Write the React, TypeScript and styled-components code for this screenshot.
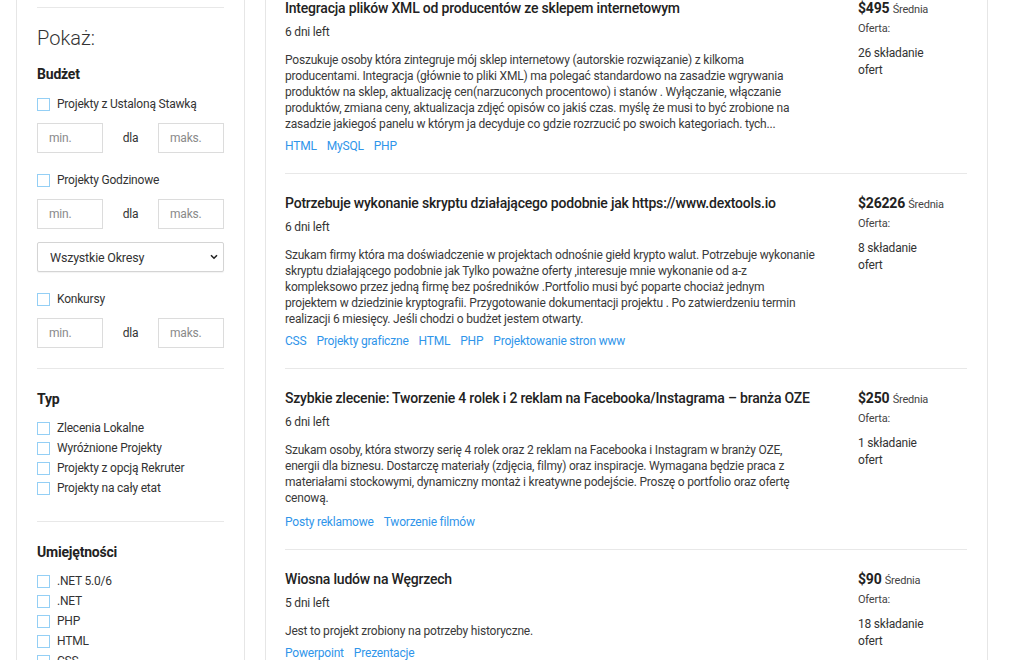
import styled, { createGlobalStyle } from "styled-components";

const GlobalStyle = createGlobalStyle`
  html, body {
    margin: 0;
    padding: 0;
    background: #ffffff;
    font-family: Roboto, "Liberation Sans", Arial, sans-serif;
    color: #333333;
    letter-spacing: -0.2px;
    overflow: hidden;
  }
`;

const Page = styled.div`
  display: flex;
  align-items: flex-start;
  gap: 20px;
  padding-left: 16px;
  margin-top: -22px;
`;

const Sidebar = styled.aside`
  width: 187px;
  flex-shrink: 0;
  padding: 28px 20px 40px;
  border: 1px solid #e6e6e6;
  background: #fff;
`;

const Divider = styled.hr<{ $top?: number; $bottom?: number }>`
  border: none;
  border-top: 1px solid #e8e8e8;
  margin: ${({ $top = 0 }) => $top}px 0 ${({ $bottom = 0 }) => $bottom}px;
`;

const ShowTitle = styled.div`
  font-size: 20px;
  line-height: 24px;
  font-weight: 300;
  letter-spacing: 0;
  color: #333;
  margin-top: 18px;
`;

const GroupTitle = styled.div<{ $top: number }>`
  font-size: 14px;
  line-height: 20px;
  font-weight: 700;
  color: #222;
  margin-top: ${({ $top }) => $top}px;
`;

const CheckRow = styled.label<{ $top?: number }>`
  display: flex;
  align-items: center;
  gap: 7px;
  font-size: 12px;
  line-height: 20px;
  color: #333;
  margin-top: ${({ $top = 0 }) => $top}px;
`;

const Box = styled.span`
  width: 13px;
  height: 13px;
  box-sizing: border-box;
  border: 1px solid #94cff5;
  background: #fff;
  flex-shrink: 0;
`;

const RangeRow = styled.div<{ $top: number }>`
  display: grid;
  grid-template-columns: 66px 1fr 66px;
  align-items: center;
  margin-top: ${({ $top }) => $top}px;
`;

const RangeInput = styled.input`
  box-sizing: border-box;
  width: 66px;
  height: 30px;
  border: 1px solid #dcdcdc;
  padding: 0 11px;
  font-family: inherit;
  font-size: 12px;
  letter-spacing: -0.2px;
  color: #333;
  outline: none;

  &::placeholder {
    color: #8a8a8a;
  }
`;

const RangeSep = styled.span`
  text-align: center;
  font-size: 12px;
  color: #333;
`;

const SelectWrap = styled.div`
  position: relative;
  margin-top: 13px;
`;

const PeriodSelect = styled.select`
  appearance: none;
  -webkit-appearance: none;
  box-sizing: border-box;
  width: 100%;
  height: 30px;
  border: 1px solid #d4d4d4;
  border-radius: 2px;
  padding: 0 12px;
  background: #fff;
  font-family: inherit;
  font-size: 12.5px;
  letter-spacing: -0.2px;
  color: #333;
  box-shadow: 0 1px 1px rgba(0, 0, 0, 0.05);
`;

const Chevron = styled.svg`
  position: absolute;
  right: 6px;
  top: 12px;
  width: 8px;
  height: 6px;
  pointer-events: none;
`;

const CheckList = styled.div`
  margin-top: 9px;
`;

const Main = styled.main`
  width: 682px;
  flex-shrink: 0;
  padding: 0 20px 0 19px;
  border: 1px solid #e6e6e6;
  background: #fff;
`;

const Card = styled.article`
  display: grid;
  grid-template-columns: 1fr 109px;
  padding: 19px 0 19px;
  border-bottom: 1px solid #e8e8e8;
`;

const CardBody = styled.div`
  min-width: 0;
`;

const Title = styled.div`
  font-size: 14px;
  line-height: 20px;
  font-weight: 500;
  color: #222;
`;

const Deadline = styled.div`
  font-size: 12px;
  line-height: 16px;
  color: #333;
  margin-top: 6px;
`;

const Description = styled.p`
  max-width: 532px;
  font-size: 12px;
  line-height: 16px;
  color: #3a3a3a;
  margin: 12px 0 0;
`;

const Tags = styled.div<{ $extra: number }>`
  display: flex;
  gap: 10px;
  margin-top: ${({ $extra }) => 6 + $extra}px;
  font-size: 12px;
  line-height: 16px;
`;

const Tag = styled.a`
  color: #2f95ea;
  text-decoration: none;
`;

const PriceCol = styled.div`
  width: 72px;
`;

const Price = styled.div`
  white-space: nowrap;
  font-size: 14px;
  line-height: 20px;
  font-weight: 700;
  color: #222;

  span {
    font-size: 11px;
    font-weight: 400;
    color: #444;
  }
`;

const OfferLabel = styled.div`
  font-size: 11px;
  line-height: 14px;
  color: #444;
  margin-top: 2px;
`;

const OfferCount = styled.div`
  font-size: 12px;
  line-height: 16.5px;
  color: #333;
  margin-top: 9px;
`;

type Project = {
  title: string;
  days: string;
  description: string;
  tags: string[];
  price: string;
  offers: number;
  tagGap?: number;
};

const projects: Project[] = [
  {
    title: "Integracja plików XML od producentów ze sklepem internetowym",
    days: "6 dni left",
    description:
      "Poszukuje osoby która zintegruje mój sklep internetowy (autorskie rozwiązanie) z kilkoma producentami. Integracja (głównie to pliki XML) ma polegać standardowo na zasadzie wgrywania produktów na sklep, aktualizację cen(narzuconych procentowo) i stanów . Wyłączanie, włączanie produktów, zmiana ceny, aktualizacja zdjęć opisów co jakiś czas. myślę że musi to być zrobione na zasadzie jakiegoś panelu w którym ja decyduje co gdzie rozrzucić po swoich kategoriach. tych...",
    tags: ["HTML", "MySQL", "PHP"],
    price: "$495",
    offers: 26,
  },
  {
    title: "Potrzebuje wykonanie skryptu działającego podobnie jak https://www.dextools.io",
    days: "6 dni left",
    description:
      "Szukam firmy która ma doświadczenie w projektach odnośnie giełd krypto walut. Potrzebuje wykonanie skryptu działającego podobnie jak Tylko poważne oferty ,interesuje mnie wykonanie od a-z kompleksowo przez jedną firmę bez pośredników .Portfolio musi być poparte chociaż jednym projektem w dziedzinie kryptografii. Przygotowanie dokumentacji projektu . Po zatwierdzeniu termin realizacji 6 miesięcy. Jeśli chodzi o budżet jestem otwarty.",
    tags: ["CSS", "Projekty graficzne", "HTML", "PHP", "Projektowanie stron www"],
    price: "$26226",
    offers: 8,
  },
  {
    title: "Szybkie zlecenie: Tworzenie 4 rolek i 2 reklam na Facebooka/Instagrama – branża OZE",
    days: "6 dni left",
    description:
      "Szukam osoby, która stworzy serię 4 rolek oraz 2 reklam na Facebooka i Instagram w branży OZE, energii dla biznesu. Dostarczę materiały (zdjęcia, filmy) oraz inspiracje. Wymagana będzie praca z materiałami stockowymi, dynamiczny montaż i kreatywne podejście. Proszę o portfolio oraz ofertę cenową.",
    tags: ["Posty reklamowe", "Tworzenie filmów"],
    price: "$250",
    offers: 1,
    tagGap: 2,
  },
  {
    title: "Wiosna ludów na Węgrzech",
    days: "5 dni left",
    description: "Jest to projekt zrobiony na potrzeby historyczne.",
    tags: ["Powerpoint", "Prezentacje"],
    price: "$90",
    offers: 18,
  },
];

const types = ["Zlecenia Lokalne", "Wyróżnione Projekty", "Projekty z opcją Rekruter", "Projekty na cały etat"];
const skills = [".NET 5.0/6", ".NET", "PHP", "HTML", "CSS", "JavaScript"];

const Range = ({ top }: { top: number }) => (
  <RangeRow $top={top}>
    <RangeInput placeholder="min." />
    <RangeSep>dla</RangeSep>
    <RangeInput placeholder="maks." />
  </RangeRow>
);

const Check = ({ label, top }: { label: string; top?: number }) => (
  <CheckRow $top={top}>
    <Box />
    {label}
  </CheckRow>
);

export default function App() {
  return (
    <>
      <GlobalStyle />
      <Page>
        <Sidebar>
          <Divider />
          <ShowTitle>Pokaż:</ShowTitle>

          <GroupTitle $top={14}>Budżet</GroupTitle>
          <Check label="Projekty z Ustaloną Stawką" top={10} />
          <Range top={9} />
          <Check label="Projekty Godzinowe" top={17} />
          <Range top={9} />
          <SelectWrap>
            <PeriodSelect defaultValue="all">
              <option value="all">Wszystkie Okresy</option>
            </PeriodSelect>
            <Chevron viewBox="0 0 8 6">
              <path d="M1 1.2 4 4.2 7 1.2" fill="none" stroke="#222" strokeWidth="1.6" />
            </Chevron>
          </SelectWrap>
          <Check label="Konkursy" top={17} />
          <Range top={9} />

          <Divider $top={20} />
          <GroupTitle $top={20}>Typ</GroupTitle>
          <CheckList>
            {types.map((t) => (
              <Check key={t} label={t} />
            ))}
          </CheckList>

          <Divider $top={23} />
          <GroupTitle $top={20}>Umiejętności</GroupTitle>
          <CheckList>
            {skills.map((s) => (
              <Check key={s} label={s} />
            ))}
          </CheckList>
        </Sidebar>

        <Main>
          {projects.map((p) => (
            <Card key={p.title}>
              <CardBody>
                <Title>{p.title}</Title>
                <Deadline>{p.days}</Deadline>
                <Description>{p.description}</Description>
                <Tags $extra={p.tagGap ?? 0}>
                  {p.tags.map((t) => (
                    <Tag key={t} href="#">
                      {t}
                    </Tag>
                  ))}
                </Tags>
              </CardBody>
              <PriceCol>
                <Price>
                  {p.price} <span>Średnia</span>
                </Price>
                <OfferLabel>Oferta:</OfferLabel>
                <OfferCount>{p.offers} składanie ofert</OfferCount>
              </PriceCol>
            </Card>
          ))}
        </Main>
      </Page>
    </>
  );
}
